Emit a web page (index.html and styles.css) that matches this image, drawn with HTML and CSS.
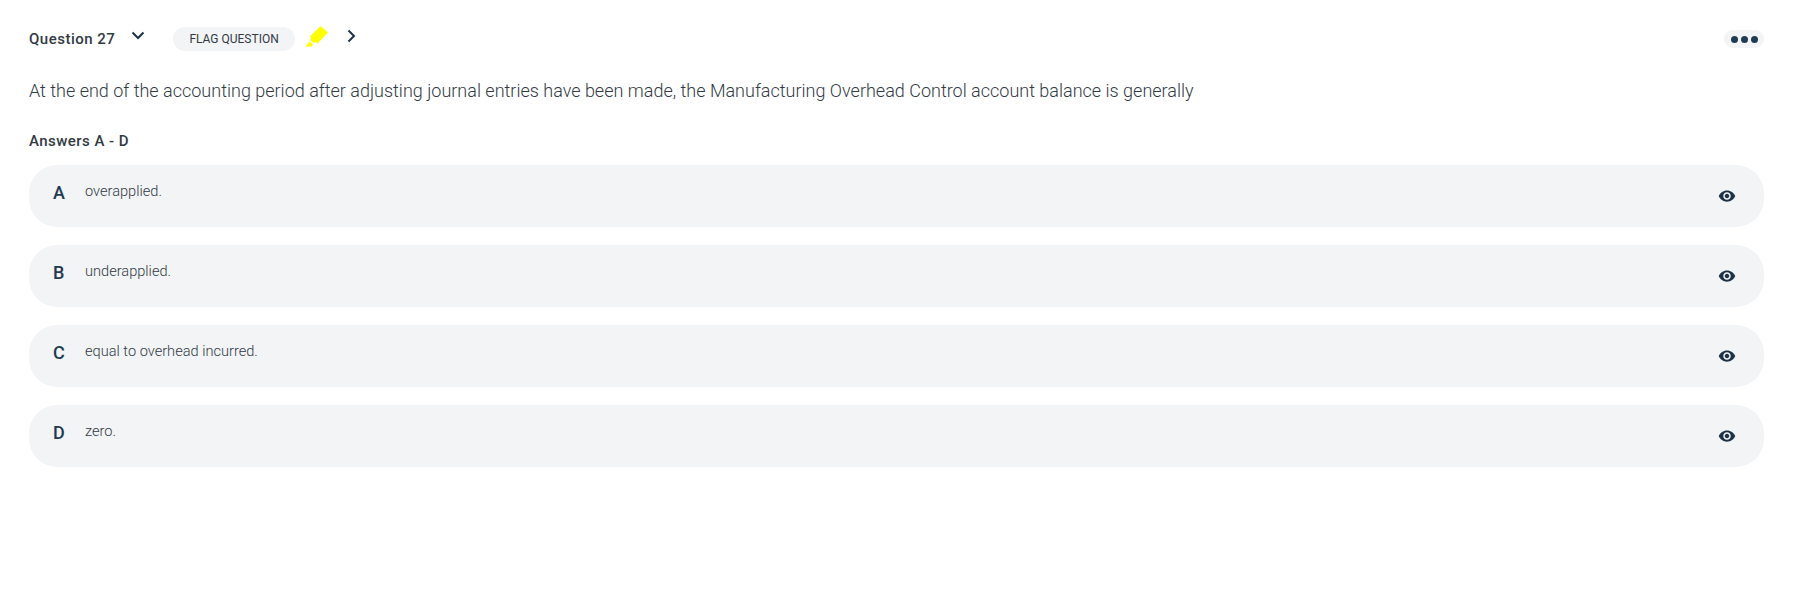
FILE: index.html
```html
<!DOCTYPE html>
<html lang="en">
<head>
    <meta charset="UTF-8">
    <meta name="viewport" content="width=device-width, initial-scale=1.0">
    <title>Question 27</title>
    <link rel="stylesheet" href="styles.css">
</head>
<body>

    <div class="question">
        <div class="question-bar">
            <span class="question-title">Question 27</span>
            <svg class="chevron-down" width="14" height="9" viewBox="0 0 14 9"><path d="M1.5 1.5 7 7l5.5-5.5" fill="none" stroke="#1f3347" stroke-width="2"/></svg>
            <span class="flag-pill">FLAG QUESTION</span>
            <svg class="marker" width="24" height="23" viewBox="0 0 24 23"><path d="M15.5 1 23 7.5 12.500 18.500 10.500 17 8.500 18 5 15 6 12.500 5 11.500Z" fill="#ffff00"/><path d="M4.500 16.500 8 19.500 6.500 21.500H0.500Z" fill="#ffff00"/></svg>
            <svg class="chevron-right" width="9" height="14" viewBox="0 0 9 14"><path d="M1.500 1.500 7 7l-5.500 5.500" fill="none" stroke="#1f3347" stroke-width="2"/></svg>
            <div class="more-pill"><i></i><i></i><i></i></div>
        </div>

        <p class="question-text">At the end of the accounting period after adjusting journal entries have been made, the Manufacturing Overhead Control account balance is generally</p>

        <h4 class="answers-title">Answers A - D</h4>

        <div class="answer">
            <span class="answer-letter">A</span>
            <span class="answer-text">overapplied.</span>
            <svg class="eye" width="18" height="18" viewBox="0 0 24 24"><path d="M12 4.500C7 4.500 2.730 7.610 1 12c1.730 4.390 6 7.500 11 7.500s9.270-3.110 11-7.500c-1.730-4.390-6-7.500-11-7.500zM12 17c-2.760 0-5-2.240-5-5s2.240-5 5-5 5 2.240 5 5-2.240 5-5 5zm0-8c-1.660 0-3 1.340-3 3s1.340 3 3 3 3-1.340 3-3-1.340-3-3-3z" fill="#1f3347"/></svg>
        </div>
        <div class="answer">
            <span class="answer-letter">B</span>
            <span class="answer-text">underapplied.</span>
            <svg class="eye" width="18" height="18" viewBox="0 0 24 24"><path d="M12 4.500C7 4.500 2.730 7.610 1 12c1.730 4.390 6 7.500 11 7.500s9.270-3.110 11-7.500c-1.730-4.390-6-7.500-11-7.500zM12 17c-2.760 0-5-2.240-5-5s2.240-5 5-5 5 2.240 5 5-2.240 5-5 5zm0-8c-1.660 0-3 1.340-3 3s1.340 3 3 3 3-1.340 3-3-1.340-3-3-3z" fill="#1f3347"/></svg>
        </div>
        <div class="answer">
            <span class="answer-letter">C</span>
            <span class="answer-text">equal to overhead incurred.</span>
            <svg class="eye" width="18" height="18" viewBox="0 0 24 24"><path d="M12 4.500C7 4.500 2.730 7.610 1 12c1.730 4.390 6 7.500 11 7.500s9.270-3.110 11-7.500c-1.730-4.390-6-7.500-11-7.500zM12 17c-2.760 0-5-2.240-5-5s2.240-5 5-5 5 2.240 5 5-2.240 5-5 5zm0-8c-1.660 0-3 1.340-3 3s1.340 3 3 3 3-1.340 3-3-1.340-3-3-3z" fill="#1f3347"/></svg>
        </div>
        <div class="answer">
            <span class="answer-letter">D</span>
            <span class="answer-text">zero.</span>
            <svg class="eye" width="18" height="18" viewBox="0 0 24 24"><path d="M12 4.500C7 4.500 2.730 7.610 1 12c1.730 4.390 6 7.500 11 7.500s9.270-3.110 11-7.500c-1.730-4.390-6-7.500-11-7.500zM12 17c-2.760 0-5-2.240-5-5s2.240-5 5-5 5 2.240 5 5-2.240 5-5 5zm0-8c-1.660 0-3 1.340-3 3s1.340 3 3 3 3-1.340 3-3-1.340-3-3-3z" fill="#1f3347"/></svg>
        </div>
    </div>

</body>
</html>
```

FILE: styles.css
```css
body {
    font-family: 'Roboto', sans-serif;
    margin: 0;
    padding: 0;
    background-color: white;
    color: #2d3b45;
}

.question {
    padding: 27px 50px 0 29px;
}

.question-bar {
    display: flex;
    align-items: flex-start;
    height: 24px;
}

.question-title {
    font-size: 15px;
    font-weight: 500;
    line-height: 24px;
    letter-spacing: 0.5px;
    color: #323a45;
}

.chevron-down {
    margin: 4px 0 0 16px;
}

.flag-pill {
    margin: 0 0 0 28px;
    padding: 0 16px;
    height: 24px;
    line-height: 24px;
    border-radius: 12px;
    background-color: #f3f4f6;
    font-size: 12px;
    color: #323a45;
}

.marker {
    margin: -2px 0 0 10px;
}

.chevron-right {
    margin: 2px 0 0 18px;
}

.more-pill {
    margin-left: auto;
    display: flex;
    align-items: center;
    gap: 3px;
    height: 18px;
    padding: 0 6.5px;
    border-radius: 9px;
    background-color: #f3f4f6;
    margin-top: 3px;
}

.more-pill i {
    display: block;
    width: 7px;
    height: 7px;
    border-radius: 50%;
    background-color: #1f3a52;
}

.question-text {
    margin: 28px 0 0;
    font-size: 18px;
    font-weight: 300;
    line-height: 24px;
    color: #323a45;
}

.answers-title {
    margin: 28px 0 0;
    font-size: 15px;
    font-weight: 500;
    line-height: 20px;
    letter-spacing: 0.45px;
    color: #323a45;
}

.answer {
    display: flex;
    align-items: flex-start;
    height: 62px;
    margin-top: 18px;
    padding: 0 28px 0 24px;
    border-radius: 28px;
    background-color: #f3f4f6;
}

.answers-title + .answer {
    margin-top: 14px;
}

.answer-letter {
    flex: 0 0 32px;
    font-size: 18px;
    font-weight: 500;
    line-height: 24px;
    margin-top: 16px;
    color: #1f3a52;
}

.answer-text {
    font-size: 14.6px;
    font-weight: 300;
    line-height: 20px;
    margin-top: 16px;
    color: #323a45;
}

.eye {
    margin: 22px 0 0 auto;
}
```
